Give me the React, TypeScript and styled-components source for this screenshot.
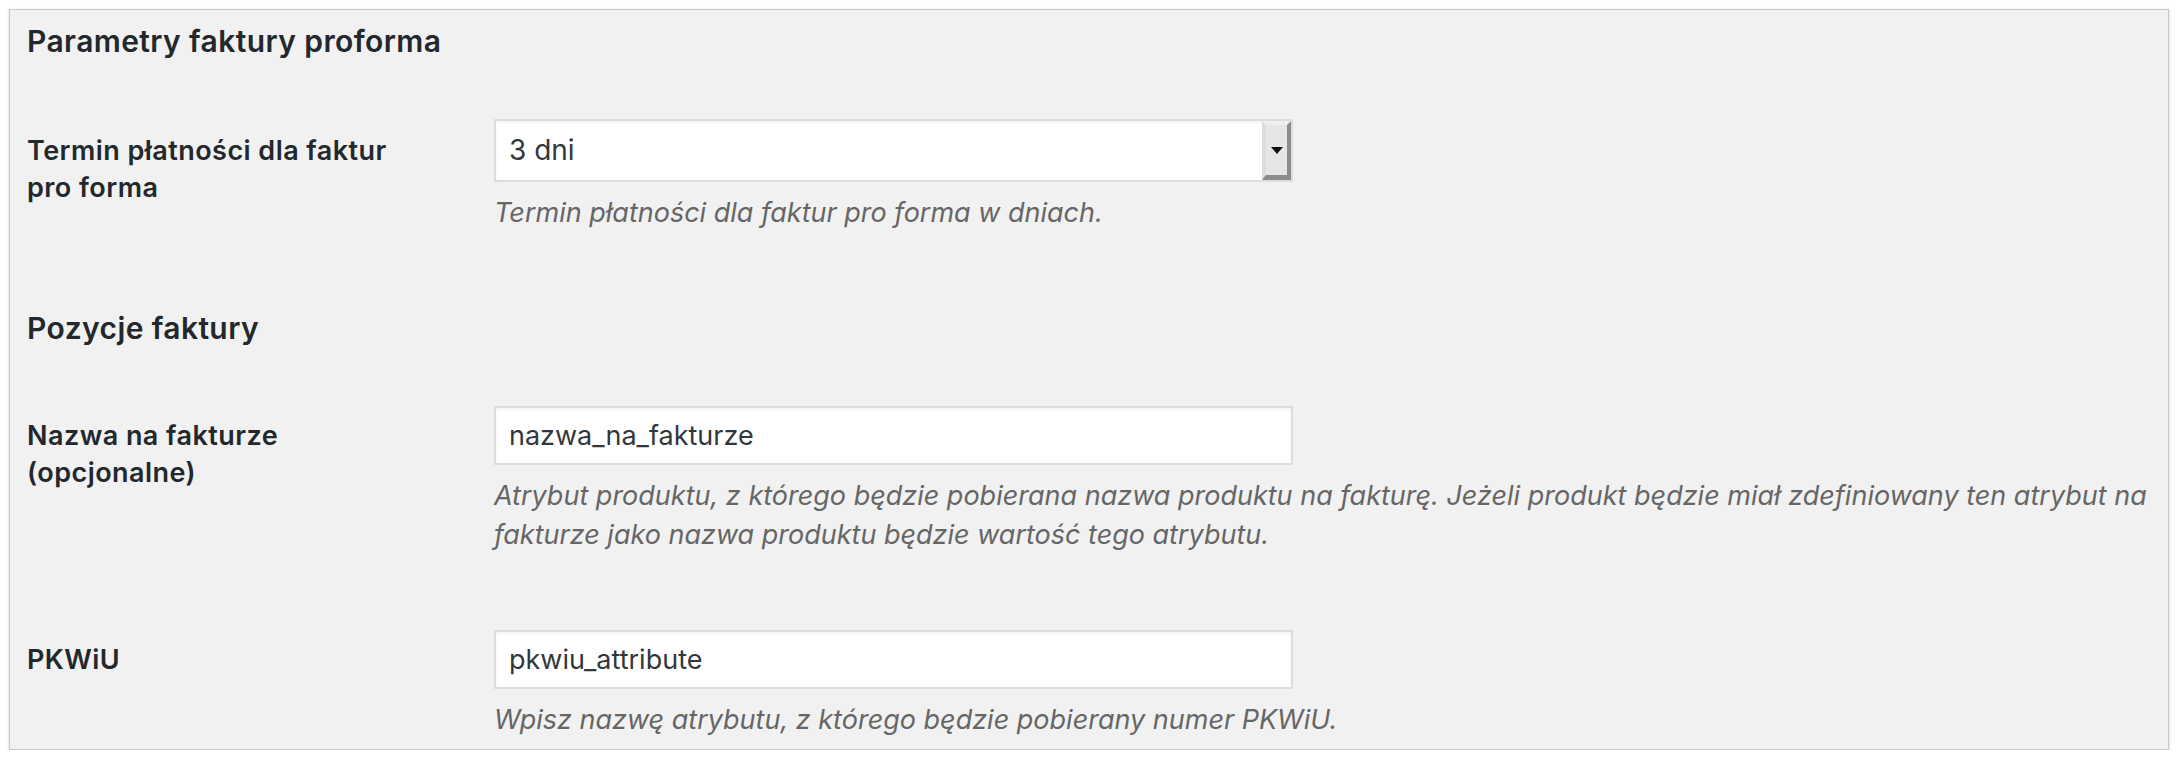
import React from "react";
import styled, { createGlobalStyle } from "styled-components";

const GlobalStyle = createGlobalStyle`
  body {
    margin: 0;
    background: #fff;
    font-family: Inter, "Noto Sans", sans-serif;
  }
`;

const fields = {
  proforma: [
    {
      id: "proforma_term",
      label: "Termin płatności dla faktur pro forma",
      type: "select",
      value: "3 dni",
      description: "Termin płatności dla faktur pro forma w dniach.",
    },
  ],
  items: [
    {
      id: "name_attr",
      label: "Nazwa na fakturze (opcjonalne)",
      type: "text",
      value: "nazwa_na_fakturze",
      description:
        "Atrybut produktu, z którego będzie pobierana nazwa produktu na fakturę. Jeżeli produkt będzie miał zdefiniowany ten atrybut na fakturze jako nazwa produktu będzie wartość tego atrybutu.",
    },
    {
      id: "pkwiu_attr",
      label: "PKWiU",
      type: "text",
      value: "pkwiu_attribute",
      description: "Wpisz nazwę atrybutu, z którego będzie pobierany numer PKWiU.",
    },
  ],
};

type Field = (typeof fields.items)[number];

const FieldRow = ({ field }: { field: Field }) => (
  <Row>
    <Label htmlFor={field.id} $control={field.type === "select" ? 63 : 59}>
      {field.label}
    </Label>
    <Body>
      {field.type === "select" ? (
        <SelectBox id={field.id}>
          <SelectValue>{field.value}</SelectValue>
          <SelectButton>
            <svg width="12" height="7" viewBox="0 0 12 7">
              <polygon points="0,0 12,0 6,7" fill="#111" />
            </svg>
          </SelectButton>
        </SelectBox>
      ) : (
        <TextInput id={field.id} defaultValue={field.value} />
      )}
      <Description>{field.description}</Description>
    </Body>
  </Row>
);

export default function App() {
  return (
    <>
      <GlobalStyle />
      <Panel>
        <SectionTitle>Parametry faktury proforma</SectionTitle>
        {fields.proforma.map((f) => (
          <FieldRow key={f.id} field={f} />
        ))}
        <SectionTitle>Pozycje faktury</SectionTitle>
        {fields.items.map((f) => (
          <FieldRow key={f.id} field={f} />
        ))}
      </Panel>
    </>
  );
}

const Panel = styled.section`
  box-sizing: border-box;
  width: 2160px;
  margin: 9px 0 0 9px;
  padding: 10px 10px 10px 17px;
  background: #f1f1f1;
  border: 1px solid #c8c8c8;
  box-shadow: 0 1px 3px rgba(0, 0, 0, 0.18);
`;

const SectionTitle = styled.h2`
  margin: 0 0 19px;
  font-size: 30px;
  line-height: 42px;
  font-weight: 600;
  letter-spacing: 0.4px;
  color: #23282d;

  * + & {
    margin-top: 37px;
  }
`;

const Row = styled.div`
  display: grid;
  grid-template-columns: 467px 1fr;
  padding: 38px 0;

  &:last-child {
    padding-bottom: 0;
  }
`;

const Label = styled.label<{ $control: number }>`
  display: block;
  width: 400px;
  padding-top: ${(p) => (p.$control - 37) / 2}px;
  font-size: 27px;
  line-height: 37px;
  font-weight: 600;
  letter-spacing: 0.45px;
  color: #23282d;
`;

const Body = styled.div`
  min-width: 0;
`;

const SelectBox = styled.div`
  box-sizing: border-box;
  display: flex;
  width: 799px;
  height: 63px;
  background: #fff;
  border: 2px solid #ddd;
  box-shadow: inset 0 2px 3px rgba(0, 0, 0, 0.05);
`;

const SelectValue = styled.span`
  flex: 1;
  padding-left: 13px;
  font-size: 28px;
  line-height: 59px;
  color: #32373c;
`;

const SelectButton = styled.span`
  box-sizing: border-box;
  display: flex;
  align-items: center;
  justify-content: center;
  width: 29px;
  background: #e6e6e6;
  border-style: solid;
  border-width: 4px 4px 5px 4px;
  border-color: #efefef #8c8c8c #8c8c8c #dcdcdc;
`;

const TextInput = styled.input`
  box-sizing: border-box;
  display: block;
  width: 799px;
  height: 59px;
  margin: 0;
  padding: 0 13px;
  background: #fff;
  border: 2px solid #ddd;
  border-radius: 0;
  box-shadow: inset 0 2px 3px rgba(0, 0, 0, 0.05);
  font-family: Inter, "Noto Sans", sans-serif;
  font-size: 27px;
  color: #32373c;
  outline: none;
`;

const Description = styled.p`
  margin: 11px 0 0;
  font-size: 27px;
  line-height: 39px;
  font-style: italic;
  color: #666;
`;
